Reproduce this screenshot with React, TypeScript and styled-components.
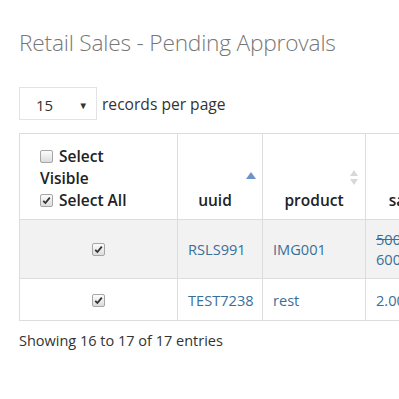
import React from 'react';
import styled, { createGlobalStyle } from 'styled-components';

const GlobalStyle = createGlobalStyle`
  html, body {
    margin: 0;
    padding: 0;
    background: #fff;
    overflow: hidden;
  }
  body {
    font-family: "Open Sans", "Liberation Sans", sans-serif;
    color: #333;
  }
`;

const Page = styled.div`
  width: 399px;
  height: 399px;
  overflow: hidden;
  padding: 0 19px;
  box-sizing: border-box;
`;

const Title = styled.h1`
  margin: 0;
  padding-top: 27px;
  font-size: 22.7px;
  font-weight: 300;
  color: #777;
  line-height: 32px;
  letter-spacing: -0.2px;
  white-space: nowrap;
`;

const LengthBar = styled.div`
  display: flex;
  align-items: center;
  gap: 5px;
  margin-top: 28px;
  font-size: 15.6px;
  white-space: nowrap;
`;

const SelectBox = styled.div`
  width: 78px;
  height: 33px;
  box-sizing: border-box;
  border: 1px solid #e3e3e3;
  display: flex;
  align-items: center;
  justify-content: space-between;
  padding: 3px 8px 0 16px;
  font-size: 15px;
  color: #333;
`;

const Caret = styled.span`
  font-size: 9.5px;
  color: #333;
`;

const Clip = styled.div`
  margin-top: 13px;
  width: 440px;
`;

const Table = styled.table`
  border-collapse: collapse;
  table-layout: fixed;
  width: 440px;
  border: 1px solid #ddd;
`;

const HeadCell = styled.th<{ $w: number; $align?: string; $padRight?: number }>`
  position: relative;
  width: ${p => p.$w}px;
  height: 86px;
  box-sizing: border-box;
  border: 1px solid #ddd;
  padding: 0 ${p => p.$padRight ?? 10}px 8px 10px;
  vertical-align: bottom;
  text-align: ${p => p.$align || 'center'};
  font-size: 15.5px;
  font-weight: 600;
  line-height: 22px;
  color: #222;
  white-space: nowrap;
`;

const SelectLabels = styled.div`
  padding-left: 10px;
  width: 100px;
  text-align: left;
  white-space: normal;
`;

const LabelLine = styled.label`
  display: inline;
`;

const Row = styled.tr<{ $stripe?: boolean }>`
  background: ${p => (p.$stripe ? '#f2f2f2' : '#fff')};
`;

const Cell = styled.td<{ $h: number; $center?: boolean }>`
  height: ${p => p.$h}px;
  box-sizing: border-box;
  border: 1px solid #ddd;
  padding: 0 10px;
  font-size: 14.6px;
  line-height: 20px;
  color: #3a6f98;
  text-align: ${p => (p.$center ? 'center' : 'left')};
  white-space: nowrap;
  vertical-align: middle;
`;

const Strike = styled.div`
  text-decoration: line-through;
`;

const Box = styled.span`
  display: inline-block;
  width: 11px;
  height: 11px;
  border: 1px solid #a6a6a6;
  border-radius: 2px;
  background: linear-gradient(#fcfcfc, #dcdcdc);
  vertical-align: -1px;
  margin-right: 2px;
  position: relative;
  svg {
    position: absolute;
    left: 1px;
    top: 1px;
  }
`;

const BodyBox = styled(Box)`
  margin-right: 0;
`;

const SortIcon = styled.svg<{ $top: number; $right: number }>`
  position: absolute;
  right: ${p => p.$right}px;
  top: ${p => p.$top}px;
`;

const Footer = styled.div`
  margin-top: 10px;
  font-size: 14.5px;
  color: #333;
  white-space: nowrap;
`;

function Check() {
  return (
    <svg width="9" height="9" viewBox="0 0 9 9">
      <path d="M1.2 4.8 L3.4 7 L7.8 1.6" fill="none" stroke="#333" strokeWidth="1.8" />
    </svg>
  );
}

function CheckBox({ checked, body }: { checked?: boolean; body?: boolean }) {
  const Comp = body ? BodyBox : Box;
  return <Comp>{checked && <Check />}</Comp>;
}

function SortAsc() {
  return (
    <SortIcon width="12" height="12" viewBox="0 0 12 12" $top={36} $right={5}>
      <path d="M1 9 L6 2 L11 9 Z" fill="#6d93c8" />
    </SortIcon>
  );
}

function SortBoth() {
  return (
    <SortIcon width="12" height="22" viewBox="0 0 12 22" $top={33} $right={5}>
      <path d="M2 9 L6 3 L10 9 Z" fill="#d8d8d8" />
      <path d="M2 12 L6 18 L10 12 Z" fill="#d8d8d8" />
    </SortIcon>
  );
}

export default function App() {
  return (
    <Page>
      <GlobalStyle />
      <Title>Retail Sales - Pending Approvals</Title>
      <LengthBar>
        <SelectBox>
          <span>15</span>
          <Caret>▼</Caret>
        </SelectBox>
        records per page
      </LengthBar>
      <Clip>
        <Table>
          <thead>
            <tr>
              <HeadCell $w={158} $align="left">
                <SelectLabels>
                  <LabelLine><CheckBox /> Select Visible</LabelLine>
                  <br />
                  <LabelLine><CheckBox checked /> Select All</LabelLine>
                </SelectLabels>
              </HeadCell>
              <HeadCell $w={85} $padRight={20}>
                uuid
                <SortAsc />
              </HeadCell>
              <HeadCell $w={103}>
                product
                <SortBoth />
              </HeadCell>
              <HeadCell $w={94} $padRight={20}>
                sales
                <SortBoth />
              </HeadCell>
            </tr>
          </thead>
          <tbody>
            <Row $stripe>
              <Cell $h={59} $center><CheckBox checked body /></Cell>
              <Cell $h={59}>RSLS991</Cell>
              <Cell $h={59}>IMG001</Cell>
              <Cell $h={59}>
                <Strike>500.00</Strike>
                <div>600.00</div>
              </Cell>
            </Row>
            <Row>
              <Cell $h={42} $center><CheckBox checked body /></Cell>
              <Cell $h={42}>TEST7238</Cell>
              <Cell $h={42}>rest</Cell>
              <Cell $h={42}>2.00</Cell>
            </Row>
          </tbody>
        </Table>
      </Clip>
      <Footer>Showing 16 to 17 of 17 entries</Footer>
    </Page>
  );
}
